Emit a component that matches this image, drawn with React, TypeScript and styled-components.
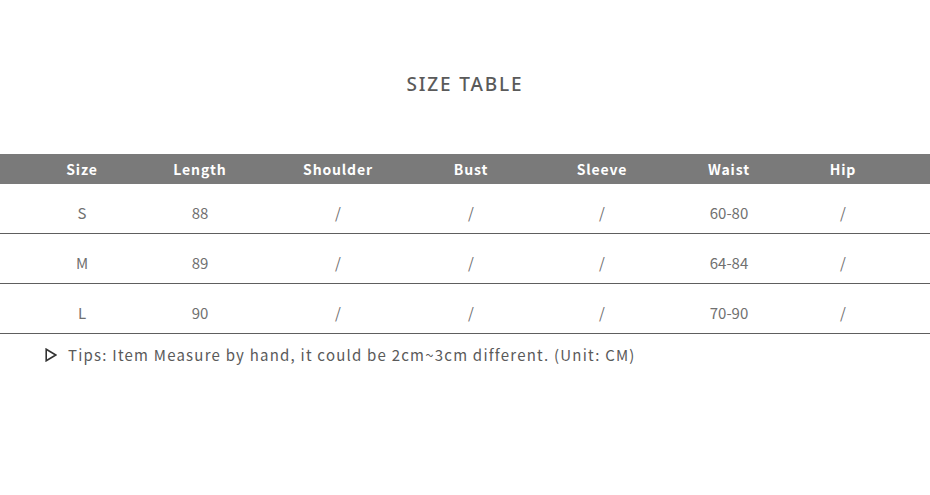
import React from "react";
import styled, { createGlobalStyle } from "styled-components";

const Global = createGlobalStyle`
  html, body { margin: 0; padding: 0; background: #fff; }
  body { font-family: "Noto Sans CJK SC", "Noto Sans", sans-serif; }
`;

const Page = styled.div`
  width: 930px;
  height: 495px;
  background: #fff;
  display: flex;
  flex-direction: column;
`;

const Title = styled.h1`
  margin: 71px 0 0;
  height: 27px;
  text-align: center;
  font-family: "Noto Sans", "Open Sans", sans-serif;
  font-weight: 500;
  font-size: 19px;
  line-height: 27px;
  letter-spacing: 1.85px;
  color: #5a5a5a;
`;

const cols = "164px 72px 204px 62px 200px 54px 174px";

const HeaderRow = styled.div`
  margin-top: 56px;
  height: 30px;
  background: #7a7a7a;
  display: grid;
  grid-template-columns: ${cols};
  align-items: center;
`;

const HeadCell = styled.div`
  text-align: center;
  white-space: nowrap;
  color: #fff;
  font-weight: 700;
  font-size: 14px;
  letter-spacing: 0.85px;
  line-height: 30px;
  display: flex;
  justify-content: center;
`;

const Row = styled.div`
  height: 49px;
  border-bottom: 1px solid #5e5e5e;
  display: grid;
  grid-template-columns: ${cols};
  align-items: center;
`;

const Cell = styled.div`
  display: flex;
  justify-content: center;
  white-space: nowrap;
  color: #707070;
  font-weight: 400;
  font-size: 15px;
  line-height: 20px;
  padding-top: 8px;
`;

const Tips = styled.div`
  display: flex;
  align-items: center;
  gap: 11px;
  margin: 11px 0 0 45px;
  color: #5a5a5a;
  font-weight: 400;
  font-size: 15px;
  letter-spacing: 1.22px;
  line-height: 20px;
`;

const Arrow = () => (
  <svg width="12" height="14" viewBox="0 0 12 14">
    <path d="M1.2 1.2 L10.8 7 L1.2 12.8 Z" fill="none" stroke="#333" strokeWidth="1.6" strokeLinejoin="miter" />
  </svg>
);

const headers = ["Size", "Length", "Shoulder", "Bust", "Sleeve", "Waist", "Hip"];
const rows = [
  ["S", "88", "/", "/", "/", "60-80", "/"],
  ["M", "89", "/", "/", "/", "64-84", "/"],
  ["L", "90", "/", "/", "/", "70-90", "/"],
];

export default function App() {
  return (
    <Page>
      <Global />
      <Title>SIZE TABLE</Title>
      <HeaderRow>
        {headers.map((h) => (
          <HeadCell key={h}>{h}</HeadCell>
        ))}
      </HeaderRow>
      {rows.map((r) => (
        <Row key={r[0]}>
          {r.map((c, i) => (
            <Cell key={i}>{c}</Cell>
          ))}
        </Row>
      ))}
      <Tips>
        <Arrow />
        <span>Tips: Item Measure by hand, it could be 2cm~3cm different. (Unit: CM)</span>
      </Tips>
    </Page>
  );
}
